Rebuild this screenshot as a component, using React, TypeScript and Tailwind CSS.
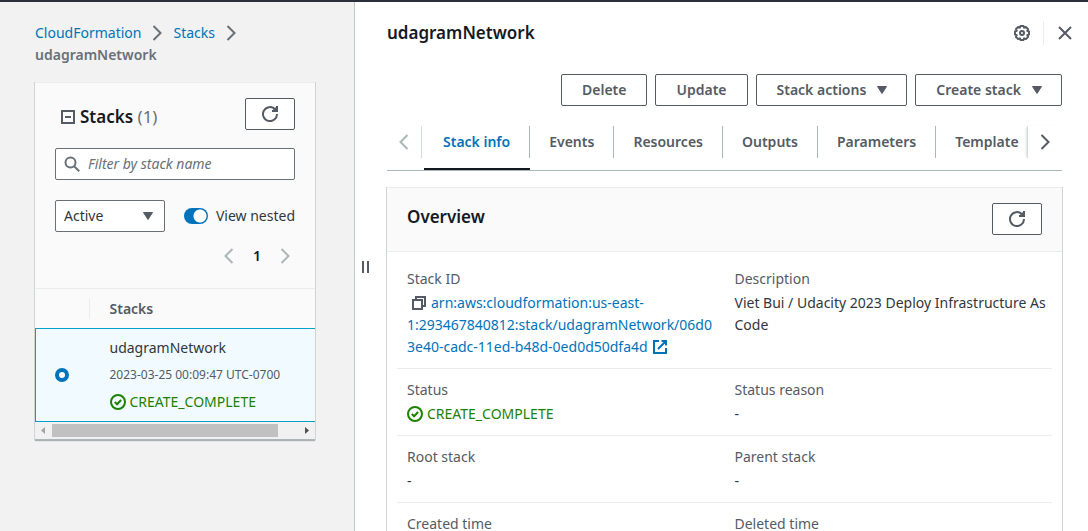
import type { ReactNode } from "react";

function ChevronRight({ className = "" }: { className?: string }) {
  return (
    <svg viewBox="0 0 16 16" className={`size-4 shrink-0 ${className}`} fill="none" stroke="currentColor" strokeWidth="2" aria-hidden="true">
      <path d="M4.5 1l7 7-7 7" />
    </svg>
  );
}

function ChevronLeft({ className = "" }: { className?: string }) {
  return (
    <svg viewBox="0 0 16 16" className={`size-4 shrink-0 ${className}`} fill="none" stroke="currentColor" strokeWidth="2" aria-hidden="true">
      <path d="M11.5 1l-7 7 7 7" />
    </svg>
  );
}

function Caret() {
  return (
    <svg viewBox="0 0 16 16" className="size-4 shrink-0" fill="currentColor" stroke="currentColor" strokeWidth="1" strokeLinejoin="round" aria-hidden="true">
      <path d="M3.5 4.5h9L8 11.5z" />
    </svg>
  );
}

function CheckCircle() {
  return (
    <svg viewBox="0 0 16 16" className="size-4 shrink-0" fill="none" stroke="currentColor" strokeWidth="2" aria-hidden="true">
      <circle cx="8" cy="8" r="7" />
      <path d="M4.8 8l2.3 2.3 4-4.3" />
    </svg>
  );
}

function RefreshButton({ label }: { label: string }) {
  return (
    <button type="button" aria-label={label} className="flex h-8 w-[50px] shrink-0 items-center justify-center rounded-[2px] border border-[#545b64] bg-white text-[#545b64]">
      <svg viewBox="0 0 16 16" className="size-4" fill="none" stroke="currentColor" strokeWidth="2" aria-hidden="true">
        <path d="M15 8A7 7 0 1 1 12.800 3" />
        <path d="M15 0v5h-5" />
        <path d="M11 4h3V1z" fill="currentColor" stroke="none" />
      </svg>
    </button>
  );
}

function ActionButton({ children, menu = false }: { children: ReactNode; menu?: boolean }) {
  return (
    <button
      type="button"
      className={`flex h-8 items-center gap-2 rounded-[2px] border border-[#545b64] bg-white text-sm font-semibold whitespace-nowrap text-[#545b64] ${menu ? "pr-4 pl-5" : "px-5"}`}
    >
      {children}
      {menu && <Caret />}
    </button>
  );
}

function Complete() {
  return (
    <span className="flex items-center gap-1 leading-[22px] text-[#1d8102]">
      <CheckCircle />
      CREATE_COMPLETE
    </span>
  );
}

function Field({ label, children }: { label: string; children: ReactNode }) {
  return (
    <div className="min-w-0 flex-1 pl-[10px]">
      <dt className="text-[#545b64]">{label}</dt>
      <dd className="mt-[2px]">{children}</dd>
    </div>
  );
}

function StacksPanel() {
  return (
    <section className="mt-4 border-t border-b border-t-[#eaeded] border-b-[#aab7b8] bg-[#fafafa] shadow-[1px_0_0_#d0d4d4,-1px_0_0_#d0d4d4,0_1px_1px_rgba(0,28,36,0.3)]">
      <div className="px-5 pt-[15px]">
        <div className="flex items-center justify-between">
          <h2 className="flex items-center gap-1 pt-[6px] pl-[5px] text-[17px] leading-6 font-semibold text-[#16191f]">
            <svg viewBox="0 0 16 16" className="size-4" fill="none" stroke="#545b64" strokeWidth="2" aria-hidden="true">
              <path d="M2 2h12v12H2zM5 8h6" />
            </svg>
            <span>
              Stacks <span className="font-normal text-[#687078]">(1)</span>
            </span>
          </h2>
          <RefreshButton label="Refresh stacks" />
        </div>
        <label className="mt-[18px] flex h-8 items-center gap-2 rounded-[2px] border border-[#687078] bg-white px-2 text-[#687078]">
          <svg viewBox="0 0 16 16" className="size-4 shrink-0" fill="none" stroke="currentColor" strokeWidth="2" aria-hidden="true">
            <circle cx="6.5" cy="6.5" r="5" />
            <path d="M10.2 10.2l5 5" />
          </svg>
          <input type="search" aria-label="Filter by stack name" placeholder="Filter by stack name" className="w-full min-w-0 bg-transparent placeholder:text-[#687078] placeholder:italic focus:outline-none" />
        </label>
        <div className="mt-5 flex items-center justify-between">
          <div className="grid w-[110px] items-center rounded-[2px] border border-[#687078] bg-white">
            <select aria-label="Stack status" defaultValue="Active" className="col-start-1 row-start-1 h-[30px] w-full appearance-none bg-transparent pl-2 text-[#32363c]">
              <option>Active</option>
              <option>Deleted</option>
            </select>
            <span className="pointer-events-none col-start-1 row-start-1 mr-2 justify-self-end text-[#545b64]">
              <Caret />
            </span>
          </div>
          <label className="flex items-center gap-2 text-[#32363c]">
            <input type="checkbox" role="switch" defaultChecked className="h-4 w-6 appearance-none rounded-full bg-[#0073bb] bg-[radial-gradient(circle_at_16px_8px,white_6px,transparent_7px)]" />
            View nested
          </label>
        </div>
        <div className="mt-3 flex h-6 items-center justify-end gap-4 pr-[2px] text-[#aab7b8]">
          <button type="button" aria-label="Previous page">
            <ChevronLeft />
          </button>
          <button type="button" className="font-semibold text-[#16191f]">
            1
          </button>
          <button type="button" aria-label="Next page">
            <ChevronRight />
          </button>
        </div>
      </div>
      <table className="mt-5 w-full border-collapse">
        <thead>
          <tr className="h-10 border-t border-[#eaeded] text-left text-[#545b64]">
            <td className="w-[54px]">
              <div className="h-5 border-r border-[#eaeded]" />
            </td>
            <th className="pl-5 font-semibold">Stacks</th>
          </tr>
        </thead>
        <tbody>
          <tr className="border border-r-0 border-[#00a1c9] bg-[#f1faff]">
            <td className="pl-[19px]">
              <input type="radio" name="stack" aria-label="udagramNetwork" defaultChecked className="block size-[14px] appearance-none rounded-full border-4 border-[#0073bb] bg-white" />
            </td>
            <td className="py-2 pl-5">
              <div className="leading-[22px] text-[#32363c]">udagramNetwork</div>
              <div className="my-1 text-xs leading-6 whitespace-nowrap text-[#545b64]">2023-03-25 00:09:47 UTC-0700</div>
              <Complete />
            </td>
          </tr>
        </tbody>
      </table>
      <div className="flex h-[17px] items-center bg-[#f1f1f1]">
        <svg viewBox="0 0 17 17" className="size-[17px] shrink-0" fill="#a3a3a3" aria-hidden="true">
          <path d="M10 5v7L6 8.500z" />
        </svg>
        <div className="flex flex-1">
          <div className="h-[13px] w-[92%] bg-[#c1c1c1]" />
        </div>
        <svg viewBox="0 0 17 17" className="size-[17px] shrink-0" fill="#505050" aria-hidden="true">
          <path d="M7 5v7l4-3.500z" />
        </svg>
      </div>
    </section>
  );
}

const tabs = ["Stack info", "Events", "Resources", "Outputs", "Parameters", "Template"];

function Tabs() {
  return (
    <div className="mt-4 flex h-[49px] border-b border-[#aab7b8]">
      <button type="button" aria-label="Scroll tabs left" className="mt-1 flex h-8 w-[35px] shrink-0 items-center justify-center border-r border-[#d5dbdb] text-[#aab7b8]">
        <ChevronLeft />
      </button>
      <div role="tablist" className="flex min-w-0 flex-1 overflow-hidden pl-[2px] font-semibold whitespace-nowrap text-[#545b64]">
        {tabs.map((tab, i) => (
          <button
            key={tab}
            type="button"
            role="tab"
            aria-selected={i === 0}
            className={i === 0 ? "shrink-0 border-b-2 border-[#16191f] pt-1 text-[#0073bb]" : "shrink-0 border-b-2 border-transparent pt-1"}
          >
            <span className={`mb-[10px] flex h-8 items-center px-[19px] ${i < tabs.length - 1 ? "border-r border-[#aab7b8]" : ""}`}>{tab}</span>
          </button>
        ))}
      </div>
      <button type="button" aria-label="Scroll tabs right" className="mt-1 flex h-8 w-[35px] shrink-0 items-center justify-center border-l border-[#d5dbdb] text-[#545b64] shadow-[-2px_0_2px_-1px_rgba(0,0,0,0.12)]">
        <ChevronRight />
      </button>
    </div>
  );
}

function Overview() {
  return (
    <section className="mt-4 border-t border-b border-t-[#eaeded] border-b-[#d5dbdb] shadow-[1px_0_0_#d0d4d4,-1px_0_0_#d0d4d4,0_1px_1px_rgba(0,28,36,0.3)]">
      <div className="flex h-16 items-center justify-between border-b border-[#eaeded] bg-[#fafafa] px-5 pb-px">
        <h2 className="pb-1 text-[17px] leading-6 font-semibold">Overview</h2>
        <RefreshButton label="Refresh overview" />
      </div>
      <dl className="divide-y divide-[#eaeded] px-[10px] pt-[6px] leading-[22px] text-[#32363c]">
        <div className="flex py-[10px]">
          <Field label="Stack ID">
            <svg viewBox="0 0 16 16" className="mr-1 ml-1 inline size-4 align-[-3px]" fill="none" stroke="#545b64" strokeWidth="2" aria-hidden="true">
              <path d="M2 5h9v9H2zM5 5V2h9v9h-3" />
            </svg>
            <a href="#stack-id" className="text-[#0073bb]">
              <span className="whitespace-nowrap">arn:aws:cloudformation:us-east-</span>
              <wbr />
              <span className="whitespace-nowrap">1:293467840812:stack/udagramNetwork/06d0</span>
              <wbr />
              <span className="whitespace-nowrap">3e40-cadc-11ed-b48d-0ed0d50dfa4d</span>
              <svg viewBox="0 0 16 16" className="ml-1 inline size-4 align-[-3px]" fill="none" stroke="currentColor" strokeWidth="2" aria-hidden="true">
                <path d="M7 2H2v12h12V9M9.500 2H14v4.500M14 2L6 10" />
              </svg>
            </a>
          </Field>
          <Field label="Description">Viet Bui / Udacity 2023 Deploy Infrastructure As Code</Field>
        </div>
        <div className="flex py-[10px]">
          <Field label="Status">
            <Complete />
          </Field>
          <Field label="Status reason">-</Field>
        </div>
        <div className="flex py-[10px]">
          <Field label="Root stack">-</Field>
          <Field label="Parent stack">-</Field>
        </div>
        <div className="flex py-[10px]">
          <Field label="Created time">2023-03-25 00:09:47 UTC-0700</Field>
          <Field label="Deleted time">-</Field>
        </div>
      </dl>
    </section>
  );
}

export default function App() {
  return (
    <div className="flex h-screen flex-col overflow-hidden bg-white font-['Noto_Sans','Open_Sans',sans-serif] text-sm text-[#16191f]">
      <header className="h-[2px] shrink-0 bg-[#2a313c]" />
      <div className="flex min-h-0 flex-1">
        <aside className="w-[355px] shrink-0 border-r border-[#c4c9c9] bg-[#f2f2f2] pr-[39px] pl-[35px]">
          <nav aria-label="Breadcrumb" className="pt-5 leading-[22px]">
            <ol className="flex flex-wrap">
              <li className="flex items-center">
                <a href="#cloudformation" className="text-[#0073bb]">CloudFormation</a>
                <ChevronRight className="mx-2 text-[#687078]" />
              </li>
              <li className="flex items-center">
                <a href="#stacks" className="text-[#0073bb]">Stacks</a>
                <ChevronRight className="mx-2 text-[#687078]" />
              </li>
              <li className="font-semibold text-[#687078]">udagramNetwork</li>
            </ol>
          </nav>
          <StacksPanel />
        </aside>
        <main className="flex min-w-0 flex-1">
          <button type="button" aria-label="Resize panel" className="flex w-5 shrink-0 items-center justify-center">
            <span className="h-3 w-[7px] border-x-2 border-[#545b64]" />
          </button>
          <div className="min-w-0 flex-1 pl-3">
            <div className="flex h-[62px] items-center justify-between pr-[15px]">
              <h1 className="text-[17px] leading-6 font-semibold">udagramNetwork</h1>
              <div className="flex items-center text-[#545b64]">
                <button type="button" aria-label="Preferences" className="pr-[13px]">
                  <svg viewBox="0 0 16 16" className="size-4" fill="none" stroke="currentColor" strokeWidth="2" strokeLinejoin="round" aria-hidden="true">
                    <path d="M6.500 1h3l.6 1.700 1.800-.8 2.200 2.200-.8 1.800 1.700.6v3l-1.700.6.8 1.800-2.200 2.200-1.800-.8-.6 1.700h-3l-.6-1.700-1.800.8-2.200-2.200.8-1.800L1 9.500v-3l1.700-.6-.8-1.800 2.200-2.200 1.800.8z" />
                    <circle cx="8" cy="8" r="2" />
                  </svg>
                </button>
                <span className="h-6 border-l border-[#eaeded]" />
                <button type="button" aria-label="Close" className="pl-[13px]">
                  <svg viewBox="0 0 16 16" className="size-4" fill="none" stroke="currentColor" strokeWidth="2" aria-hidden="true">
                    <path d="M2 2l12 12M14 2L2 14" />
                  </svg>
                </button>
              </div>
            </div>
            <div className="pr-[26px]">
              <div className="mt-[10px] flex justify-end gap-2">
                <ActionButton>Delete</ActionButton>
                <ActionButton>Update</ActionButton>
                <ActionButton menu>Stack actions</ActionButton>
                <ActionButton menu>Create stack</ActionButton>
              </div>
              <Tabs />
              <Overview />
            </div>
          </div>
        </main>
      </div>
    </div>
  );
}
